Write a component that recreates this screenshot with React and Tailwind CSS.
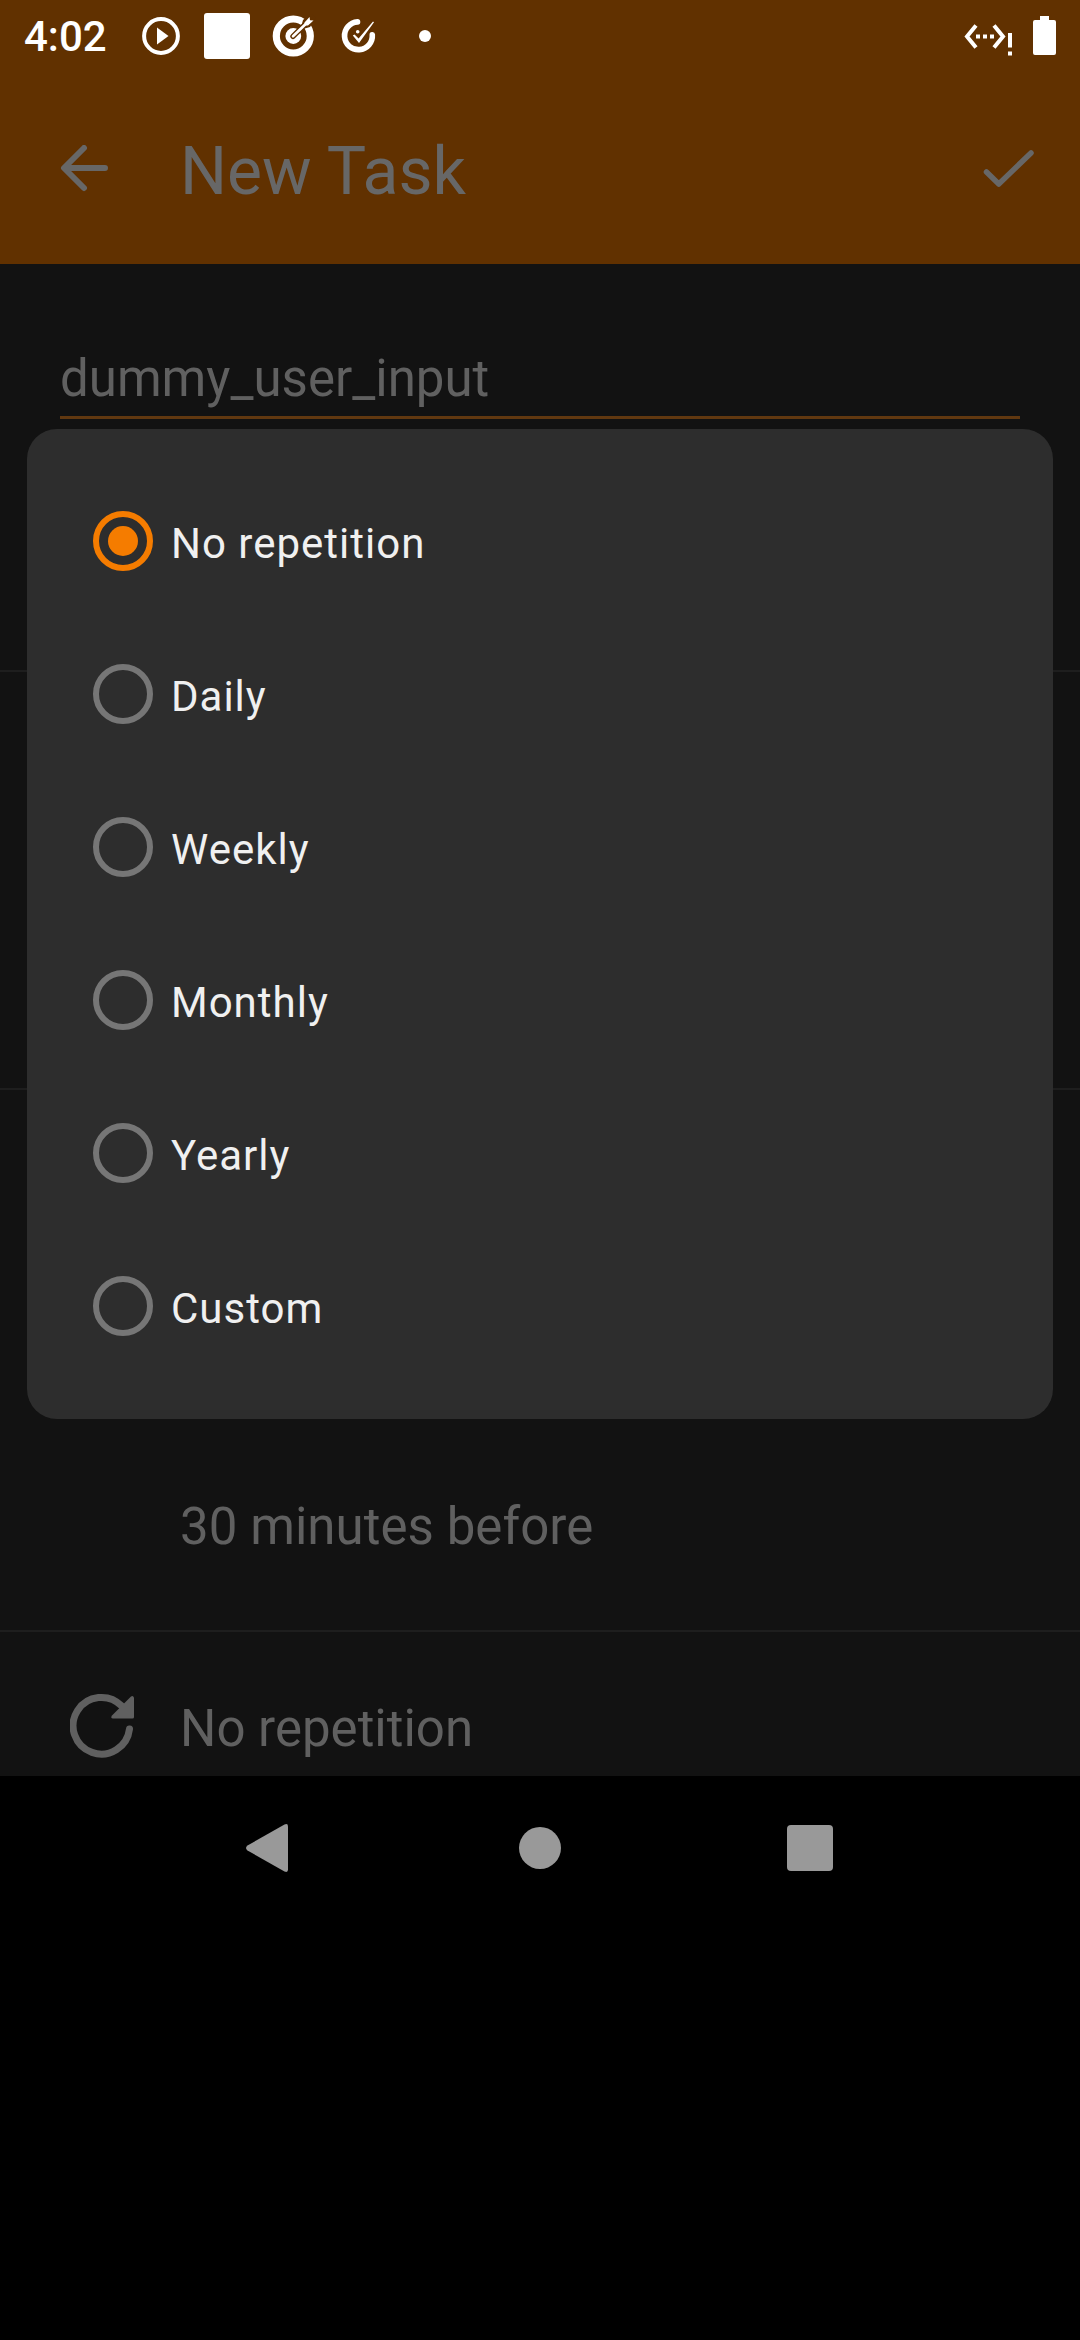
const OPTIONS = ['No repetition', 'Daily', 'Weekly', 'Monthly', 'Yearly', 'Custom'];

function StatusBar() {
  return (
    <div className="flex h-[72px] items-center text-white">
      <span className="ml-[24px] w-[118px] pt-[1px] text-[42px] leading-[72px] font-medium">4:02</span>
      <svg className="h-[38px] w-[38px]" viewBox="0 0 38 38">
        <circle cx="19" cy="19" r="16.9" fill="none" stroke="currentColor" strokeWidth="4" />
        <path d="M15 10.5v17L26.5 19z" fill="currentColor" />
      </svg>
      <div className="ml-6 h-[46px] w-[46px] rounded-[3px] bg-white" />
      <svg className="ml-[22px] h-[44px] w-[44px]" viewBox="0 0 44 44">
        <circle cx="21.300" cy="22" r="17" fill="none" stroke="currentColor" strokeWidth="7.200" />
        <circle cx="21.300" cy="22" r="7.900" fill="currentColor" />
        <path d="M21 22.300L31 12.300" stroke="#613100" strokeWidth="5.400" strokeLinecap="round" />
        <path d="M29 13.500L31 6L39 -1L44 4L38 13L31 15z" fill="#613100" />
        <path d="M21 22.300L35 8.800" stroke="currentColor" strokeWidth="2.600" strokeLinecap="round" />
        <path d="M32.500 8.500L37.500 3L38 6.200L41.500 6.500L36 11.500H32.500z" fill="currentColor" />
      </svg>
      <svg className="ml-[24px] h-[40px] w-[40px]" viewBox="0 0 40 40">
        <path d="M17.500 5.900A13.900 13.900 0 1 0 32.300 18.700" fill="none" stroke="currentColor" strokeWidth="5.600" strokeLinecap="round" />
        <path d="M12.800 19.500L14.500 18.600L18.600 22.400L33 5.500L34 6.300L19 27z" fill="currentColor" />
        <circle cx="17.700" cy="15.700" r="1.800" fill="currentColor" />
      </svg>
      <div className="ml-[39px] h-3 w-3 rounded-full bg-white" />
      <div className="ml-auto flex h-[72px] items-start pr-[24px]">
        <svg className="mt-[22px] h-[36px] w-[50px]" viewBox="0 0 50 36">
          <path d="M12 3.500L3 14.500L12 25.500M30 3.500L39 14.500L30 25.500" fill="none" stroke="currentColor" strokeWidth="4" />
          <path d="M12 12.500h4v4h-4zM19 12.500h4v4h-4zM26 12.500h4v4h-4z" fill="currentColor" />
          <path d="M44 11h4v14.500h-4zM44 29.500h4v4h-4z" fill="currentColor" />
        </svg>
        <svg className="mt-[16px] ml-[19px] h-[39px] w-[23px]" viewBox="0 0 23 39">
          <path d="M7 0h9v4h5q2 0 2 2v31q0 2-2 2H2q-2 0-2-2V6q0-2 2-2h5z" fill="currentColor" />
        </svg>
      </div>
    </div>
  );
}

function AppBar() {
  return (
    <div className="flex h-[192px] items-start text-[#676767]">
      <svg className="mt-[73px] ml-[60px] h-[48px] w-[49px]" viewBox="0 0 49 48" fill="none" stroke="currentColor" strokeWidth="6" strokeLinecap="round">
        <path d="M45 23H4.500M24 3L4 23L24 43" strokeLinejoin="round" />
      </svg>
      <h1 className="mt-[60px] ml-[71px] text-[66px] leading-[80px] whitespace-nowrap">New Task</h1>
      <svg className="mt-[77px] mr-[44px] ml-auto h-[40px] w-[54px]" viewBox="0 0 54 40" fill="none" stroke="currentColor" strokeWidth="5.500" strokeLinecap="round" strokeLinejoin="round">
        <path d="M4.500 23L16.800 35L49 4" />
      </svg>
    </div>
  );
}

function Option({ label, selected }) {
  return (
    <div className="flex h-[153px] items-start pt-[47px] pl-[66px]">
      <div
        className={
          selected
            ? 'flex h-[60px] w-[60px] items-center justify-center rounded-full border-[6px] border-[#f57c00]'
            : 'h-[60px] w-[60px] rounded-full border-[6px] border-[#767676]'
        }
      >
        {selected && <div className="h-[30px] w-[30px] rounded-full bg-[#f57c00]" />}
      </div>
      <span className="mt-[3px] ml-[18px] text-[42px] leading-[60px] tracking-[1px] text-[#f0f0f0]">{label}</span>
    </div>
  );
}

export default function App() {
  return (
    <div className="relative flex h-[2340px] w-[1080px] flex-col overflow-hidden bg-black font-['Roboto',sans-serif]">
      <header className="h-[264px] bg-[#613100]">
        <StatusBar />
        <AppBar />
      </header>

      <main className="flex h-[1512px] flex-col overflow-hidden bg-[#121212] text-[51px] leading-[60px] text-[#606060]">
        <section className="h-[408px] border-b-2 border-[#1e1e1e] px-[60px] pt-[85px]">
          <div className="h-[70px] border-b-[3px] border-[#613810]">dummy_user_input</div>
        </section>
        <section className="h-[418px] border-b-2 border-[#1e1e1e]" />
        <section className="flex h-[542px] flex-col justify-end border-b-2 border-[#1e1e1e] pb-[73px] pl-[180px] tracking-[0.050px]">
          30 minutes before
        </section>
        <section className="flex items-start pt-[61px] pl-[70px]">
          <svg className="h-[65px] w-[65px]" viewBox="0 0 65 65">
            <path d="M59.500 36A28.300 28.300 0 1 1 51.500 12.800" fill="none" stroke="currentColor" strokeWidth="7" strokeLinecap="round" />
            <path d="M64 4.500V24q0 1.500-1.500 1.500H43q-3-.5-1-3L61 3.500q2-1.500 3 1z" fill="currentColor" />
          </svg>
          <span className="mt-[6px] ml-[45px]">No repetition</span>
        </section>
      </main>

      <nav className="flex h-[144px] items-center text-[#999]">
        <svg className="ml-[246px] h-[48px] w-[42px]" viewBox="0 0 42 48">
          <path d="M42 2.500v43q0 3.500-3.500 2L1.500 26.500q-3-2.500 0-5L38.500 .5Q42-1 42 2.500z" fill="currentColor" />
        </svg>
        <div className="ml-[231px] h-[42px] w-[42px] rounded-full bg-[#999]" />
        <div className="ml-[226px] h-[46px] w-[46px] rounded-[4px] bg-[#999]" />
      </nav>

      <div role="dialog" className="absolute top-[429px] left-[27px] h-[990px] w-[1026px] rounded-[30px] bg-[#2d2d2d] pt-[35px]">
        {OPTIONS.map((label, i) => (
          <Option key={label} label={label} selected={i === 0} />
        ))}
      </div>
    </div>
  );
}
